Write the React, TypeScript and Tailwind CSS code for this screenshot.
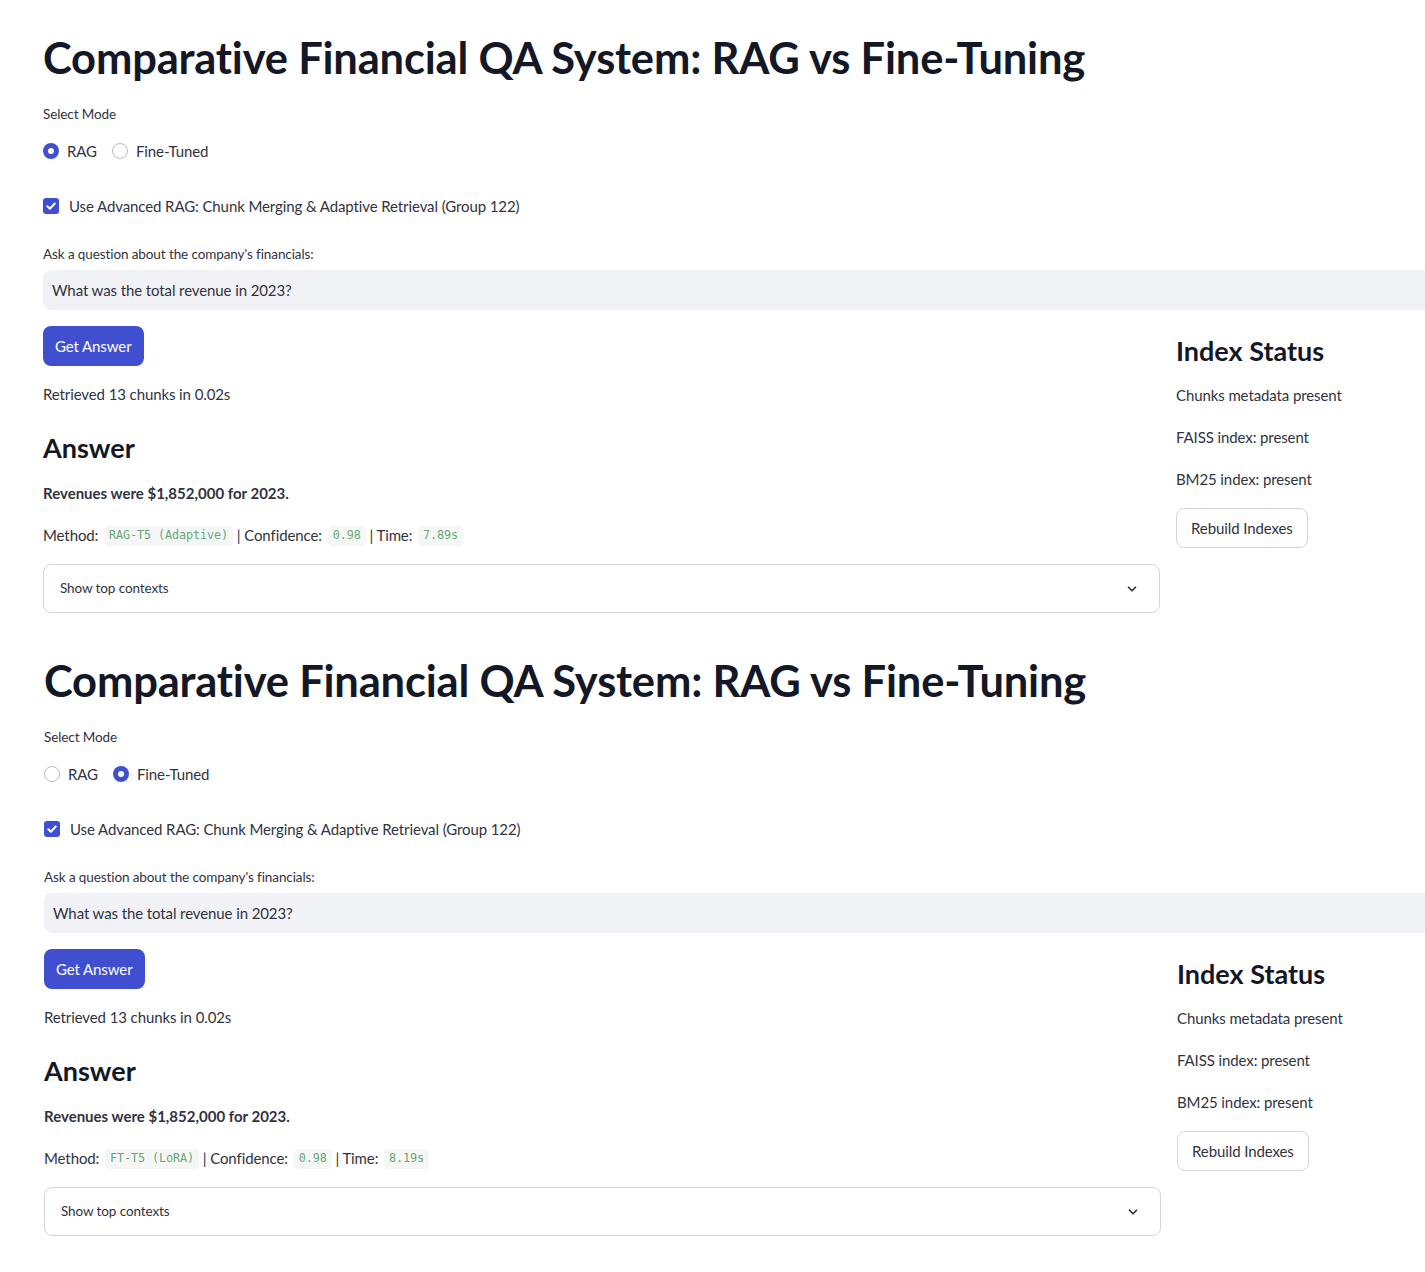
import React from "react";

const font = { fontFamily: "Lato, 'Noto Sans', sans-serif" };

function Radio({ checked, label }: { checked: boolean; label: string }) {
  return (
    <div className="flex items-center gap-[8px]">
      {checked ? (
        <span className="w-4 h-4 rounded-full bg-[#3f4fcf] flex items-center justify-center">
          <span className="w-[6px] h-[6px] rounded-full bg-white" />
        </span>
      ) : (
        <span className="w-4 h-4 rounded-full border border-[#b9bcc4] bg-white" />
      )}
      <span className="text-[15px] tracking-[-0.1px] text-[#31333f]">{label}</span>
    </div>
  );
}

function Code({ children }: { children: React.ReactNode }) {
  return (
    <span
      className="h-5 mt-[2px] ml-[2px] flex items-center bg-[#f5f7f6] text-[#68a878] text-[11.8px] px-[5px] rounded"
      style={{ fontFamily: "'DejaVu Sans Mono', monospace" }}
    >
      {children}
    </span>
  );
}

function Section({ fine, offset }: { fine: boolean; offset: boolean }) {
  return (
    <div className={offset ? "pl-[44px] pt-[20px] h-[623px]" : "pl-[43px] pt-[20px] h-[623px]"}>
      <div className="h-[76px] flex items-center">
        <h1 className="text-[43.5px] font-bold text-[#141826] tracking-[-0.2px] leading-none">
          Comparative Financial QA System: RAG vs Fine-Tuning
        </h1>
      </div>
      <div className="h-5 mt-2 flex items-center text-[13.5px] tracking-[-0.1px] text-[#31333f]">Select Mode</div>
      <div className="h-6 mt-[15px] flex items-center gap-[15px]">
        <Radio checked={!fine} label="RAG" />
        <Radio checked={fine} label="Fine-Tuned" />
      </div>
      <div className="h-6 mt-[31px] flex items-center gap-[10px]">
        <span className="w-4 h-4 rounded-[3px] bg-[#3f4fcf] flex items-center justify-center">
          <svg width="12" height="12" viewBox="0 0 12 12" fill="none">
            <path d="M2.3 6.2 L4.9 8.7 L9.8 3.5" stroke="white" strokeWidth="2" strokeLinecap="round" strokeLinejoin="round" />
          </svg>
        </span>
        <span className="text-[15px] tracking-[-0.1px] text-[#31333f]">
          Use Advanced RAG: Chunk Merging &amp; Adaptive Retrieval (Group 122)
        </span>
      </div>
      <div className="h-5 mt-[26px] flex items-center text-[13.5px] tracking-[-0.1px] text-[#31333f]">
        Ask a question about the company's financials:
      </div>
      <div className="h-10 mt-[6px] bg-[#f0f2f6] rounded-l-lg flex items-center pl-[9px] text-[15px] tracking-[-0.1px] text-[#31333f]">
        What was the total revenue in 2023?
      </div>
      <div className="flex gap-4 mt-4">
        <div className="w-[1117px] shrink-0">
          <button className="h-10 px-[12px] rounded-lg bg-[#3f4fcf] text-white text-[15px] tracking-[-0.1px]">Get Answer</button>
          <div className="h-6 mt-4 flex items-center text-[15px] tracking-[-0.1px] text-[#31333f]">Retrieved 13 chunks in 0.02s</div>
          <div className="h-9 mt-6 flex items-center text-[27px] font-bold text-[#141826]">Answer</div>
          <div className="h-6 mt-[15px] flex items-center text-[15px] font-bold text-[#31333f]">
            Revenues were $1,852,000 for 2023.
          </div>
          <div className="h-6 mt-[18px] flex items-center text-[15px] tracking-[-0.1px] text-[#31333f] whitespace-pre">
            <span>Method: </span>
            <Code>{fine ? "FT-T5 (LoRA)" : "RAG-T5 (Adaptive)"}</Code>
            <span> | Confidence: </span>
            <Code>0.98</Code>
            <span> | Time: </span>
            <Code>{fine ? "8.19s" : "7.89s"}</Code>
          </div>
          <div className="h-[49px] mt-[17px] border border-[#d5d6da] rounded-lg flex items-center justify-between pl-4 pr-[20px]">
            <span className="text-[13.5px] tracking-[-0.1px] text-[#31333f]">Show top contexts</span>
            <svg width="14" height="14" viewBox="0 0 24 24" fill="none">
              <path d="M6 9l6 6 6-6" stroke="#31333f" strokeWidth="3" strokeLinecap="round" strokeLinejoin="round" />
            </svg>
          </div>
        </div>
        <div className="flex-1">
          <div className="h-9 mt-[7px] flex items-center text-[27px] font-bold text-[#141826]">Index Status</div>
          <div className="h-6 mt-[14px] flex items-center text-[15px] tracking-[-0.1px] text-[#31333f]">Chunks metadata present</div>
          <div className="h-6 mt-[18px] flex items-center text-[15px] tracking-[-0.1px] text-[#31333f]">FAISS index: present</div>
          <div className="h-6 mt-[18px] flex items-center text-[15px] tracking-[-0.1px] text-[#31333f]">BM25 index: present</div>
          <button className="h-10 mt-[17px] px-[14px] rounded-lg border border-[#d5d6da] bg-white text-[15px] tracking-[-0.1px] text-[#31333f]">
            Rebuild Indexes
          </button>
        </div>
      </div>
    </div>
  );
}

export default function App() {
  return (
    <div className="w-[1425px] h-[1272px] overflow-hidden bg-white" style={font}>
      <Section fine={false} offset={false} />
      <Section fine={true} offset={true} />
    </div>
  );
}
